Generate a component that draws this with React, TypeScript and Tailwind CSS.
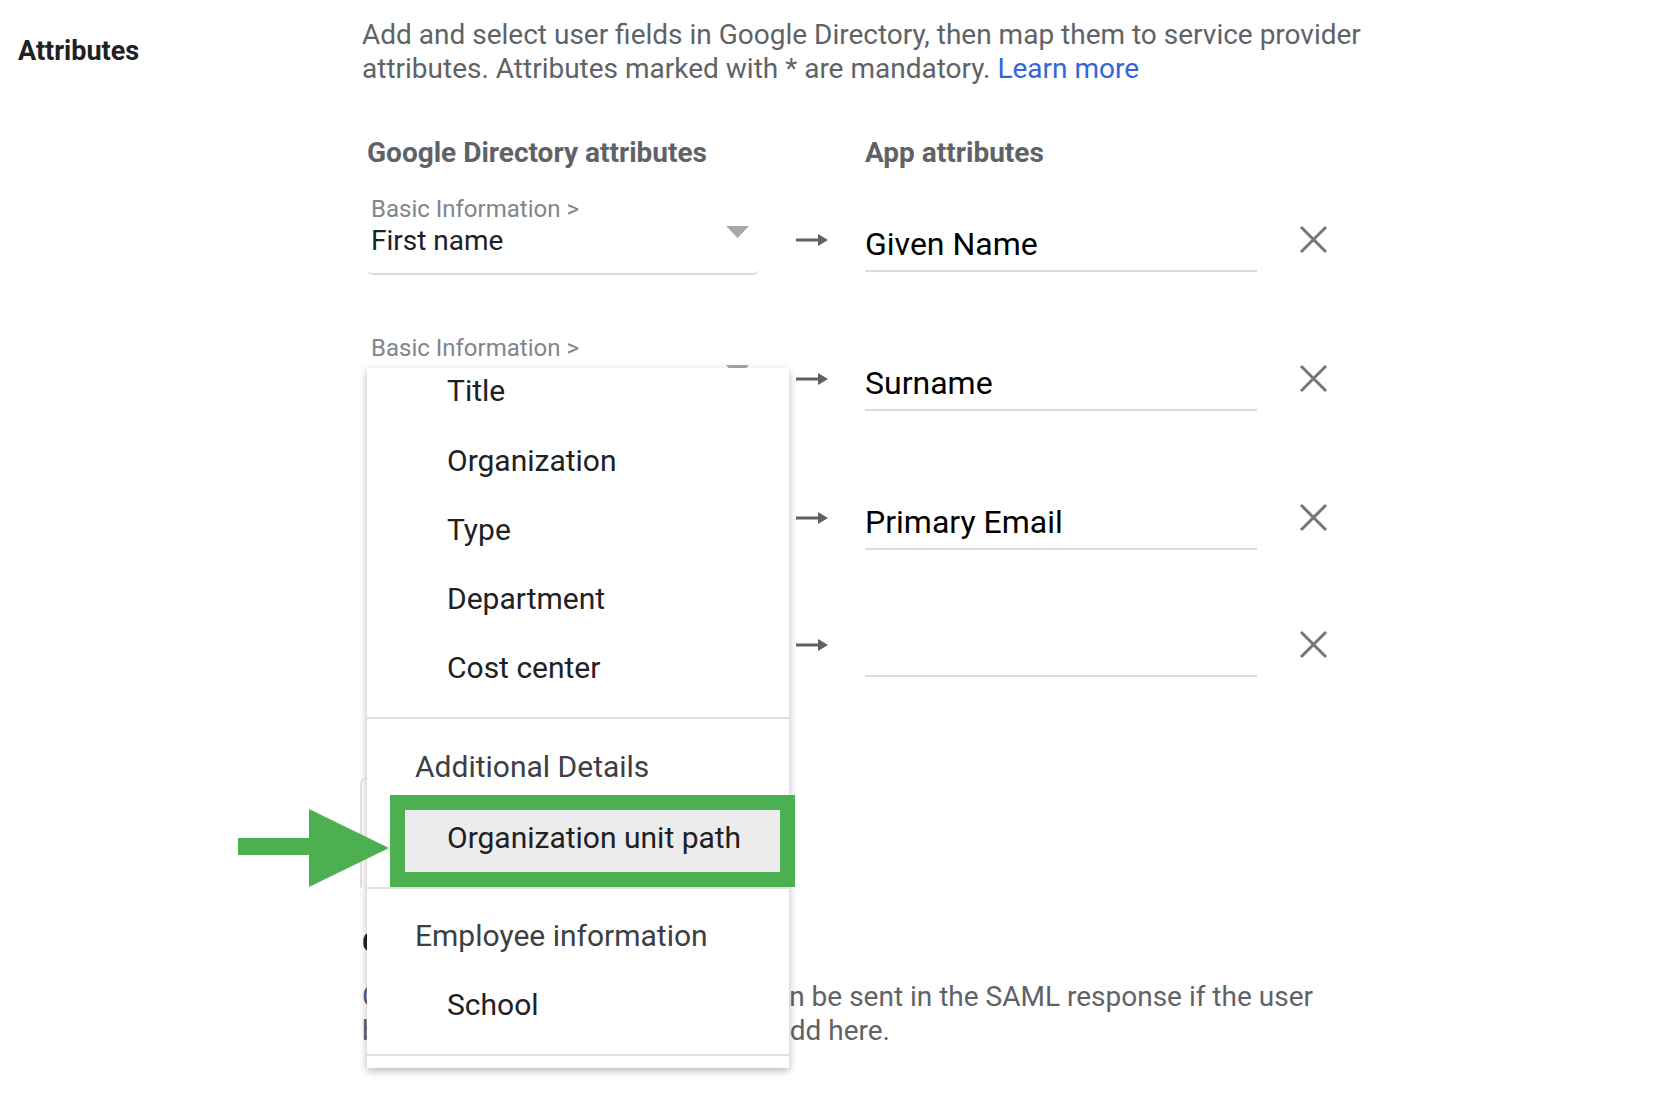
import React from 'react';

/* ── attribute mapping rows ── */
const rows = [
  { label: 'Basic Information >', value: 'First name', app: 'Given Name', h: 'h-[139px]' },
  { label: 'Basic Information >', value: 'Last name', app: 'Surname', h: 'h-[139px]' },
  { label: 'Basic Information >', value: 'Primary email', app: 'Primary Email', h: 'h-[127px]' },
  { label: '', value: '', app: '', h: 'h-[100px]' },
];

const menuTop = ['Title', 'Organization', 'Type', 'Department', 'Cost center'];

function ArrowRight() {
  return (
    <svg width="32" height="16" viewBox="0 0 32 16" className="mt-[37px] shrink-0">
      <rect x="0" y="6.5" width="24" height="3" fill="#616161" />
      <path d="M22 2 L32 8 L22 14 Z" fill="#616161" />
    </svg>
  );
}

function CloseX() {
  return (
    <svg width="29" height="29" viewBox="0 0 29 29" className="mt-[30px] shrink-0">
      <path d="M2 2 L27 27 M27 2 L2 27" stroke="#757575" strokeWidth="3" />
    </svg>
  );
}

function MappingRow({ r }: { r: (typeof rows)[number] }) {
  return (
    <div className={`flex items-start ${r.h}`}>
      {/* directory select */}
      <div className="ml-[5px] w-[392px] shrink-0 relative border-b-2 border-[#dadce0] rounded-b-md pl-[4px] pb-[15px]">
        <div className="h-[28px] text-[24px] leading-[28px] text-[#80868b]">{r.label}</div>
        <div className="mt-[1px] h-[34px] text-[28px] leading-[34px] text-[#202124]">{r.value}</div>
        <svg width="23" height="12" viewBox="0 0 23 12" className="absolute right-[10px] top-[31px]">
          <path d="M0 0 L23 0 L11.5 12 Z" fill="#a8a8a8" />
        </svg>
      </div>
      <div className="w-[37px] shrink-0" />
      <ArrowRight />
      <div className="w-[37px] shrink-0" />
      {/* app attribute input */}
      <div className="mt-[32px] w-[392px] shrink-0 border-b-2 border-[#dadce0] pb-[9px]">
        <div className="h-[34px] text-[32px] leading-[34px] text-black">{r.app}</div>
      </div>
      <div className="w-[42px] shrink-0" />
      <CloseX />
    </div>
  );
}

function Dropdown() {
  return (
    <div className="absolute left-[367px] top-[368px] w-[422px] h-[700px] bg-white shadow-[0_3px_8px_rgba(0,0,0,0.28)] text-[30px] leading-[34px] text-[#202124]">
      {menuTop.map((m, i) => (
        <div
          key={m}
          className={i === 0 ? 'h-[58px] flex items-end pb-[18px] pl-[80px]' : 'h-[69px] flex items-center pl-[80px]'}
        >
          {m}
        </div>
      ))}
      <div className="mt-[15px] h-[2px] bg-[#e0e0e0]" />
      <div className="pt-[31px] pl-[48px] text-[#3c4043]">Additional Details</div>
      {/* highlighted option */}
      <div className="mt-[11px] ml-[23px] -mr-[6px] h-[92px] border-[15px] border-[#4caf50] bg-[#ececec] flex items-center pl-[42px] pb-[6px]">
        Organization unit path
      </div>
      <div className="h-[2px] bg-[#e0e0e0]" />
      <div className="pt-[30px] pl-[48px] text-[#3c4043]">Employee information</div>
      <div className="mt-[17px] h-[69px] flex items-center pl-[80px]">School</div>
      <div className="mt-[15px] h-[2px] bg-[#e0e0e0]" />
    </div>
  );
}

export default function App() {
  return (
    <div
      className="relative w-[1669px] h-[1109px] bg-white overflow-hidden"
      style={{ fontFamily: 'Roboto, "Noto Sans", Arial, sans-serif' }}
    >
      <div className="flex pt-[18px]">
        <div className="w-[362px] shrink-0 pl-[18px] pt-[16px]">
          <h2 className="text-[27px] leading-[34px] font-bold text-[#202124]">Attributes</h2>
        </div>

        <div className="flex-1">
          <p className="text-[28px] leading-[34px] text-[#5f6368]">
            Add and select user fields in Google Directory, then map them to service provider
            <br />
            attributes. Attributes marked with * are mandatory.{' '}
            <span className="text-[#3367d6]">Learn more</span>
          </p>

          <div className="mt-[50px] flex h-[34px] text-[28px] leading-[34px] font-bold text-[#5f6368]">
            <div className="ml-[5px] w-[392px]">Google Directory attributes</div>
            <div className="ml-[106px]">App attributes</div>
          </div>

          <div className="mt-[25px]">
            {rows.map((r, i) => (
              <MappingRow key={i} r={r} />
            ))}
          </div>

          <div className="mt-[226px]">
            <h3 className="text-[28px] leading-[34px] font-bold text-[#202124]">Group membership (optional)</h3>
            <p className="mt-[20px] text-[28px] leading-[34px] text-[#5f6368]">
              Group membership information can be sent in the SAML response if the user
              <br />
              belongs to any of the groups you add here.
            </p>
          </div>
        </div>
      </div>

      {/* edge of a card hidden behind the menu */}
      <div className="absolute left-[360px] top-[778px] w-[7px] h-[110px] rounded-tl-md border-l-2 border-t border-[#e4e4e4]" />

      <Dropdown />

      {/* callout arrow */}
      <svg width="151" height="78" viewBox="0 0 151 78" className="absolute left-[238px] top-[809px]">
        <rect x="0" y="29" width="72" height="17" fill="#4caf50" />
        <path d="M71 0 L151 39 L71 78 Z" fill="#4caf50" />
      </svg>
    </div>
  );
}
